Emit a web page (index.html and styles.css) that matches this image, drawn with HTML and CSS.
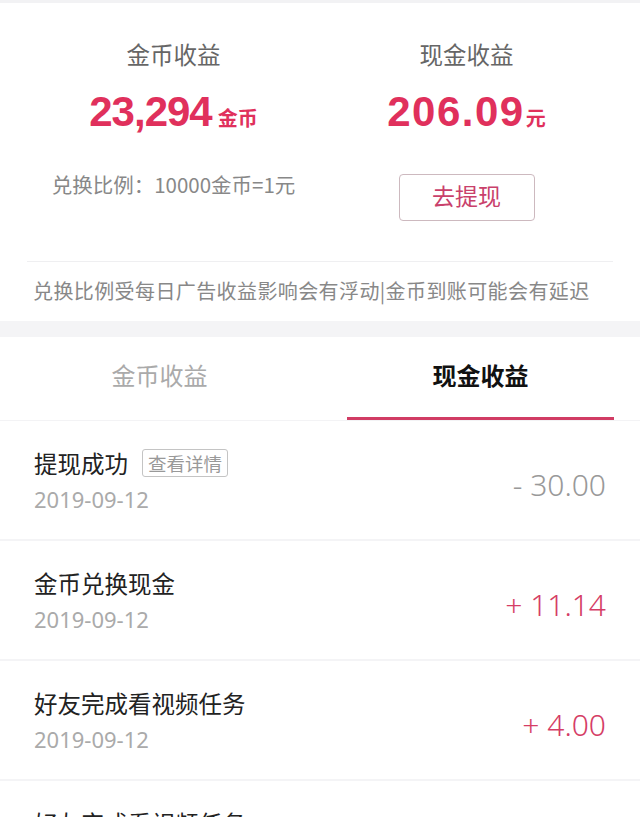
FILE: index.html
```html
<!DOCTYPE html>
<html lang="zh-CN">
<head>
    <meta charset="UTF-8" />
    <meta name="viewport" content="width=device-width, initial-scale=1.0" />
    <title>我的收益</title>
    <link rel="stylesheet" href="styles.css">
</head>
<body>
    <div class="topline"></div>

    <section class="summary">
        <div class="summary-col">
            <h2 class="summary-title">金币收益</h2>
            <p class="summary-amount">23,294<span class="unit">金币</span></p>
            <p class="rate">兑换比例：10000金币=1元</p>
        </div>
        <div class="summary-col">
            <h2 class="summary-title">现金收益</h2>
            <p class="summary-amount cash">206.09<span class="unit">元</span></p>
            <button class="withdraw">去提现</button>
        </div>
    </section>

    <div class="note-wrap">
        <p class="note">兑换比例受每日广告收益影响会有浮动|金币到账可能会有延迟</p>
    </div>

    <div class="band"></div>

    <nav class="tabs">
        <div class="tab">金币收益</div>
        <div class="tab active">现金收益</div>
    </nav>

    <ul class="records">
        <li class="record">
            <div class="record-info">
                <div class="record-title">提现成功<span class="tag">查看详情</span></div>
                <div class="record-date">2019-09-12</div>
            </div>
            <div class="record-amount minus">- 30.00</div>
        </li>
        <li class="record">
            <div class="record-info">
                <div class="record-title">金币兑换现金</div>
                <div class="record-date">2019-09-12</div>
            </div>
            <div class="record-amount plus">+ 11.14</div>
        </li>
        <li class="record">
            <div class="record-info">
                <div class="record-title">好友完成看视频任务</div>
                <div class="record-date">2019-09-12</div>
            </div>
            <div class="record-amount plus">+ 4.00</div>
        </li>
        <li class="record">
            <div class="record-info">
                <div class="record-title">好友完成看视频任务</div>
                <div class="record-date">2019-09-12</div>
            </div>
            <div class="record-amount plus">+ 4.00</div>
        </li>
    </ul>
</body>
</html>
```

FILE: styles.css
```css
body { margin: 0; background: #fff; color: #222; font-family: "Noto Sans CJK SC", "Noto Sans", sans-serif; }
h2, p { margin: 0; font-weight: normal; }

.topline { height: 3px; background: #f2f2f4; }

.summary { display: grid; grid-template-columns: 1fr 1fr; margin: 0 27px; padding: 36px 0 40px; border-bottom: 1px solid #efeff1; }
.summary-col { display: flex; flex-direction: column; align-items: center; }
.summary-title { font-size: 23.5px; line-height: 30px; color: #666; }
.summary-amount { margin-top: 18px; font-family: "Liberation Sans", Arial, sans-serif; font-weight: bold; font-size: 42px; line-height: 50px; letter-spacing: -1px; color: #e0305c; }
.summary-amount.cash { letter-spacing: 1.5px; }
.unit { margin-left: 6px; font-family: "Noto Sans CJK SC", sans-serif; font-size: 20px; letter-spacing: 0; }
.cash .unit { margin-left: 1px; }
.rate { margin-top: 28px; font-size: 20.5px; line-height: 26px; color: #888; }
.withdraw { margin-top: 31px; width: 136px; height: 47px; padding: 0 0 6px; background: #fff; border: 1px solid #cdb9bf; border-radius: 4px; font-family: "Noto Sans CJK SC", sans-serif; font-size: 23px; color: #c9406b; cursor: pointer; }

.note-wrap { padding: 15px 33px 16px; }
.note { font-size: 20px; line-height: 28px; color: #888; white-space: nowrap; letter-spacing: 0.4px; }

.band { height: 16px; background: #f4f4f6; }

.tabs { display: flex; justify-content: space-between; padding: 0 26px; border-bottom: 1px solid #f3f3f5; }
.tab { width: 267px; height: 83px; padding-bottom: 9px; display: flex; align-items: center; justify-content: center; box-sizing: border-box; font-size: 24px; color: #aaa; }
.tab.active { padding-bottom: 6px; border-bottom: 3px solid #d13c64; color: #111; font-weight: bold; }

.records { list-style: none; margin: 0; padding: 0; }
.record { display: flex; justify-content: space-between; align-items: center; height: 118px; padding: 0 34px; border-bottom: 2px solid #f4f4f6; }
.record-info { display: flex; flex-direction: column; }
.record-title { display: flex; align-items: center; font-size: 23.5px; line-height: 30px; color: #222; }
.tag { margin-left: 14px; height: 26px; padding: 0 5px; border: 1px solid #c4c4c4; border-radius: 3px; font-size: 18.5px; line-height: 26px; color: #999; }
.record-date { margin-top: 8px; font-family: "Noto Sans", sans-serif; font-size: 22px; line-height: 26px; color: #aaa; }
.record-amount { padding-top: 8px; font-family: "Noto Sans", sans-serif; font-weight: 300; font-size: 30px; }
.record-amount.minus { color: #999; }
.record-amount.plus { color: #d53d66; }
```
